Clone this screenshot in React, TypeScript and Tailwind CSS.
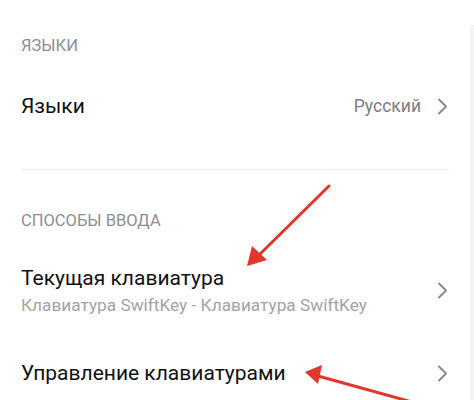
import React from 'react';

const font = { fontFamily: 'Roboto, "Noto Sans", sans-serif' };

const SectionHeader: React.FC<{ title: string; className?: string }> = ({ title, className }) => (
    <div className={`px-[21px] text-[16.5px] leading-[20px] text-[#8e8e93] ${className || ''}`}>{title}</div>
);

const Chevron = () => (
    <svg width="11" height="17" viewBox="0 0 11 17" className="shrink-0 text-[#8a8a8a]">
        <polyline points="2,1.5 9,8.5 2,15.5" fill="none" stroke="currentColor" strokeWidth="2" strokeLinecap="round" strokeLinejoin="round" />
    </svg>
);

export default function App() {
    return (
        <div className="relative w-[474px] h-[400px] bg-white overflow-hidden flex" style={font}>
            <div className="flex-1 flex flex-col">
                <SectionHeader title="ЯЗЫКИ" className="mt-[36px]" />

                <div className="flex items-center pl-[21px] pr-[22px] mt-[37px]">
                    <span className="flex-1 text-[21px] leading-[26px] text-[#111]">Языки</span>
                    <span className="text-[17.5px] text-[#7d7d7d] mr-[16px]">Русский</span>
                    <Chevron />
                </div>

                <div className="mx-[21px] mt-[50px] h-px bg-[#ececec]" />

                <SectionHeader title="СПОСОБЫ ВВОДА" className="mt-[41px]" />

                <div className="flex items-center pl-[21px] pr-[22px] mt-[34px]">
                    <div className="flex-1 flex flex-col">
                        <span className="text-[21px] leading-[26px] text-[#111]">Текущая клавиатура</span>
                        <span className="text-[17.25px] leading-[22px] text-[#a3a3a3] mt-[3px]">Клавиатура SwiftKey - Клавиатура SwiftKey</span>
                    </div>
                    <Chevron />
                </div>

                <div className="flex items-center pl-[21px] pr-[22px] mt-[44px]">
                    <span className="flex-1 text-[21px] leading-[26px] text-[#111]">Управление клавиатурами</span>
                    <Chevron />
                </div>
            </div>
            <div className="w-[4px] mt-[25px] bg-[#f4f4f4]" />

            {/* annotation arrows */}
            <svg className="absolute inset-0 pointer-events-none" width="474" height="400" viewBox="0 0 474 400">
                <line x1="329" y1="186" x2="258" y2="256" stroke="#e0362c" strokeWidth="3" strokeLinecap="round" />
                <polygon points="247,266 252,246 267,260" fill="#e0362c" />
                <line x1="412" y1="402" x2="318" y2="376" stroke="#e0362c" strokeWidth="3" strokeLinecap="round" />
                <polygon points="305,372 322,365 318,384" fill="#e0362c" />
            </svg>
        </div>
    );
}
